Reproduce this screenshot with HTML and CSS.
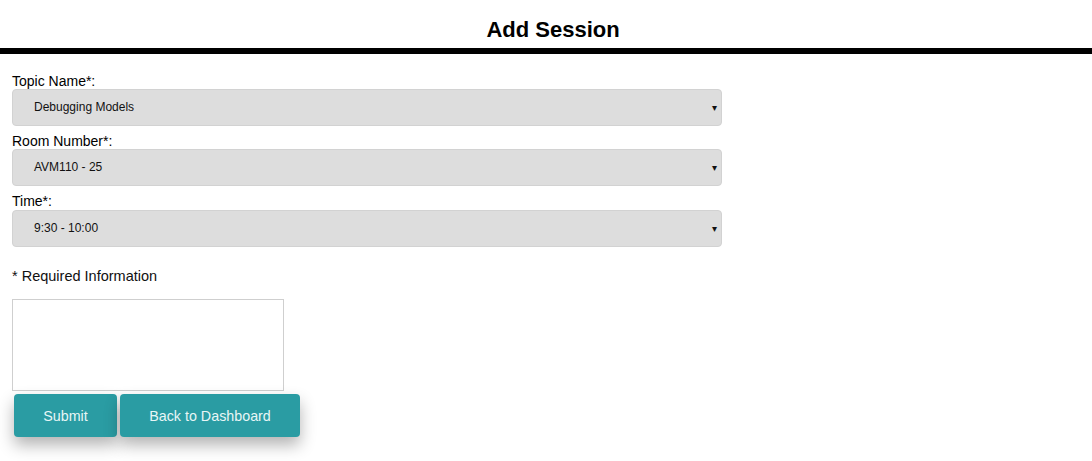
FILE: index.html
```html
<!DOCTYPE html>
<html>
<head>
<meta charset="utf-8">
<link rel="stylesheet" href="styles.css">
</head>
<body>
<header class="top">
  <h1 class="title">Add Session</h1>
</header>
<form class="form">
  <div class="field">
    <label class="label">Topic Name*:</label>
    <div class="select"><span>Debugging Models</span><span class="arrow">▾</span></div>
  </div>
  <div class="field">
    <label class="label">Room Number*:</label>
    <div class="select"><span>AVM110 - 25</span><span class="arrow">▾</span></div>
  </div>
  <div class="field">
    <label class="label label-time">Time*:</label>
    <div class="select"><span>9:30 - 10:00</span><span class="arrow">▾</span></div>
  </div>
  <p class="note">* Required Information</p>
  <div class="textarea"></div>
  <div class="buttons">
    <button type="button" class="btn btn-submit">Submit</button>
    <button type="button" class="btn btn-back">Back to Dashboard</button>
  </div>
</form>
</body>
</html>
```
FILE: styles.css
```css
html, body {
  margin: 0;
  padding: 0;
  background: #fff;
  font-family: "Liberation Sans", Arial, sans-serif;
  color: #000;
}
body {
  min-height: 461px;
}
.top {
  border-bottom: 6px solid #000;
  height: 54px;
  box-sizing: border-box;
  display: flex;
  justify-content: center;
  align-items: flex-start;
  padding-left: 14px;
}
.title {
  margin: 0;
  padding-top: 18px;
  font-size: 22px;
  line-height: 24px;
  font-weight: bold;
}
.form {
  padding: 17px 12px 30px 12px;
}
.field {
  display: flex;
  flex-direction: column;
}
.label {
  font-size: 14px;
  line-height: 20px;
  height: 18px;
}
.label-time {
  height: 19px;
  line-height: 21px;
}
.select {
  width: 710px;
  height: 37px;
  box-sizing: border-box;
  background: #dddddd;
  border: 1px solid #d2d2d2;
  border-radius: 4px;
  display: flex;
  align-items: center;
  justify-content: space-between;
  padding: 0 4px 0 21px;
  font-size: 12px;
  color: #111;
  margin-bottom: 5px;
  line-height: 14px;
}
.select span:first-child {
  position: relative;
  top: -1px;
}
.arrow {
  font-size: 10px;
  color: #111;
}
.note {
  margin: 15px 0 0 0;
  font-size: 14.5px;
  line-height: 18px;
  color: #111;
}
.textarea {
  margin-top: 14px;
  width: 272px;
  height: 92px;
  box-sizing: border-box;
  border: 1px solid #cfcfcf;
  background: #fff;
}
.buttons {
  display: flex;
  gap: 3px;
  padding-left: 2px;
  margin-top: 3px;
}
.btn {
  height: 43px;
  border: none;
  border-radius: 4px;
  background: #2a9ca3;
  color: #e8f6f6;
  font-family: "Liberation Sans", Arial, sans-serif;
  font-size: 14.3px;
  box-shadow: 0 8px 16px rgba(0,0,0,0.3);
}
.btn-submit { width: 103px; }
.btn-back { width: 180px; }
```
